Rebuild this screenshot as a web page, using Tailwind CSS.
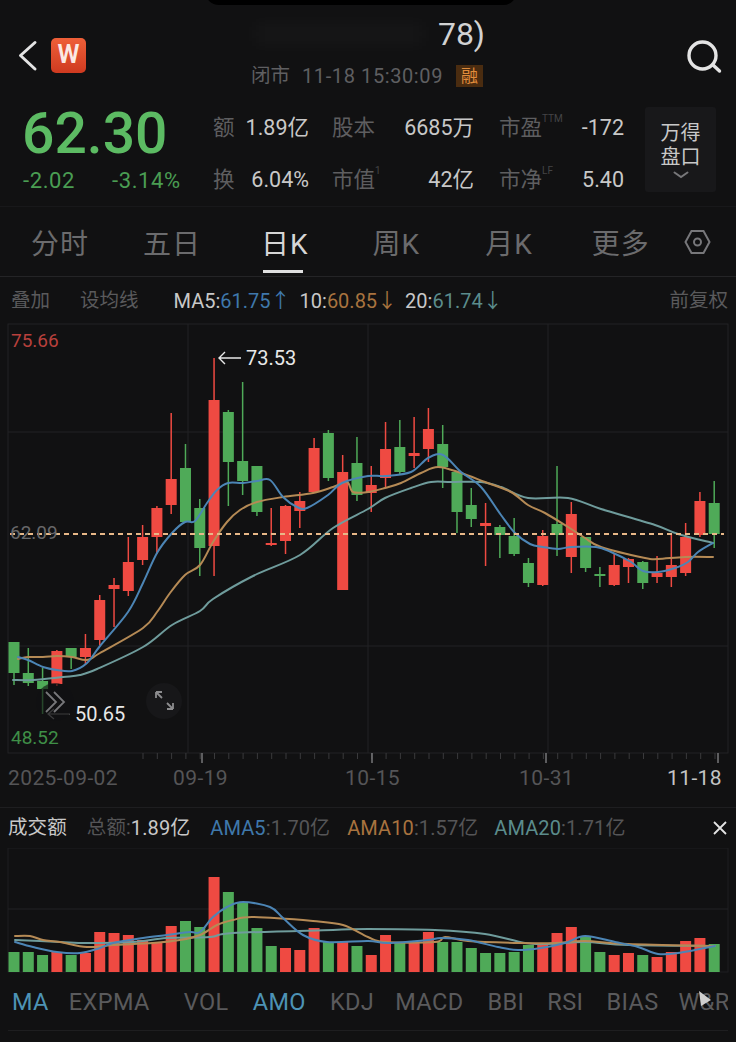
<!DOCTYPE html>
<html lang="zh">
<head>
    <meta charset="UTF-8">
    <title>日K</title>
    <script src="https://cdn.jsdelivr.net/npm/@tailwindcss/browser@4"></script>
</head>
<body class="bg-[#111112]">
<div class="relative w-[736px] h-[1042px] overflow-hidden bg-[#111112] font-[Roboto,'Noto_Sans_CJK_SC',sans-serif] text-[#c8c8c8]">
    <!-- notch -->
    <div class="absolute left-[205px] top-[-20px] w-[312px] h-[25px] rounded-b-[14px] bg-black"></div>

    <!-- header -->
    <header class="relative h-[100px] flex items-start pl-[18px] pr-[14px]">
        <svg class="mt-[40px]" width="20" height="32" viewBox="0 0 20 32" fill="none" stroke="#e4e4e4" stroke-width="3" stroke-linecap="round" stroke-linejoin="round"><path d="M17 2.5 L2.5 15.5 L17 29"/></svg>
        <div class="ml-[13px] mt-[38px] w-[35px] h-[35px] rounded-[5px] bg-gradient-to-b from-[#ee5f38] to-[#cf3a20] flex items-center justify-center text-[#fbe9e4] font-semibold text-[25px] leading-none pb-[2px]">W</div>
        <div class="ml-[165px] w-[236px] flex flex-col items-end">
            <div class="flex items-center h-[30px] mt-[19px]">
                <div class="w-[170px] h-[24px] bg-white/[0.025] blur-sm mr-[14px]"></div>
                <span class="text-[32px] leading-none text-[#d2d2d2] mr-[2px]">78)</span>
            </div>
            <div class="flex items-center self-start mt-[16px] text-[19.5px] leading-none text-[#5f5f61] whitespace-nowrap">
                <span>闭市</span>
                <span class="ml-[12px] text-[20px] tracking-[0.6px]">11-18 15:30:09</span>
                <span class="ml-[13px] w-[27px] h-[22px] bg-[#4a2c10] text-[#e08c3c] text-[17px] flex items-center justify-center">融</span>
            </div>
        </div>
        <svg class="ml-auto mt-[39px]" width="36" height="36" viewBox="0 0 36 36" fill="none" stroke="#e4e4e4" stroke-width="3.4" stroke-linecap="round"><circle cx="16.5" cy="16.5" r="13.5"/><path d="M27 26 L33.5 32"/></svg>
    </header>

    <!-- quote -->
    <section class="h-[107px] flex pl-[23px] border-b border-[#18181a]">
        <div class="w-[190px]">
            <div class="text-[57px] leading-none font-medium text-[#5cbb63] mt-[5px] ml-[-1px]">62.30</div>
            <div class="flex text-[22px] tracking-[0.6px] leading-none text-[#4a9d53] mt-[8px]">
                <span class="w-[89px]">-2.02</span>
                <span>-3.14%</span>
            </div>
        </div>
        <div class="flex flex-col gap-[22px] mt-[13px] text-[21.5px] leading-[30px] whitespace-nowrap">
            <div class="flex gap-[23px]">
                <div class="w-[96px] flex justify-between"><span class="text-[#5e5e60]">额</span><span>1.89亿</span></div>
                <div class="w-[142px] flex justify-between"><span class="text-[#5e5e60]">股本</span><span>6685万</span></div>
                <div class="w-[125px] ml-[2px] flex justify-between"><span class="text-[#5e5e60]">市盈<sup class="text-[10px] text-[#444446] align-super">TTM</sup></span><span>-172</span></div>
            </div>
            <div class="flex gap-[23px]">
                <div class="w-[96px] flex justify-between"><span class="text-[#5e5e60]">换</span><span>6.04%</span></div>
                <div class="w-[142px] flex justify-between"><span class="text-[#5e5e60]">市值<sup class="text-[10px] text-[#444446] align-super">1</sup></span><span>42亿</span></div>
                <div class="w-[125px] ml-[2px] flex justify-between"><span class="text-[#5e5e60]">市净<sup class="text-[10px] text-[#444446] align-super">LF</sup></span><span>5.40</span></div>
            </div>
        </div>
        <div class="ml-[21px] mt-[7px] w-[71px] h-[85px] rounded-[3px] bg-[#18181a] flex flex-col items-center pt-[14px] text-[20px] leading-[24px]">
            <span>万得</span>
            <span>盘口</span>
            <svg class="mt-[2px]" width="16" height="8" viewBox="0 0 16 8" fill="none" stroke="#77777a" stroke-width="2" stroke-linecap="round"><path d="M1.5 1.5 L8 6 L14.5 1.5"/></svg>
        </div>
    </section>

    <!-- period tabs -->
    <nav class="relative h-[70px] flex items-center pl-[31px] pt-[6px] text-[28px] tracking-[1px] leading-none text-[#6b6b6d] border-b border-[#242426] whitespace-nowrap">
        <span>分时</span>
        <span class="ml-[54px]">五日</span>
        <span class="ml-[60px] text-[#d6d6d6] relative">日K<span class="absolute left-[2px] top-[39px] w-[40px] h-[3px] bg-[#e0e0e0]"></span></span>
        <span class="ml-[64px]">周K</span>
        <span class="ml-[65px]">月K</span>
        <span class="ml-[59px]">更多</span>
        <svg class="ml-[34px] mt-[-6px]" width="27" height="26" viewBox="0 0 27 26" fill="none" stroke="#77777a" stroke-width="2"><path d="M7.5 2 H19.5 L25.5 13 L19.5 24 H7.5 L1.5 13 Z"/><circle cx="13.5" cy="13" r="3.5"/></svg>
    </nav>

    <!-- MA legend -->
    <div class="h-[46px] flex items-center pl-[11px] pr-[8px] pt-[2px] text-[19.5px] leading-none whitespace-nowrap">
        <span class="text-[#5a5a5c]">叠加</span>
        <span class="ml-[30px] text-[#5a5a5c]">设均线</span>
        <span class="ml-[35px] flex text-[20px]">
            <span>MA5:</span><span class="text-[#3f78ab]">61.75↑</span>
            <span class="ml-[9px]">10:</span><span class="text-[#a8733f]">60.85↓</span>
            <span class="ml-[8px]">20:</span><span class="text-[#5b8c8c]">61.74↓</span>
        </span>
        <span class="ml-auto text-[#5a5a5c]">前复权</span>
    </div>

    <!-- k line chart -->
    <div class="relative h-[485px] border-b border-[#1e1e20]">
        <svg id="kline" class="block" width="736" height="484" viewBox="0 323 736 484"></svg>
        <span class="absolute left-[11px] top-[7px] text-[19px] leading-[22px] text-[#b8403c]">75.66</span>
        <span class="absolute left-[246px] top-[23px] text-[20px] leading-[24px] text-[#e8e8e8]">73.53</span>
        <span class="absolute left-[10px] top-[199px] text-[19px] leading-[22px] text-[#68686a]">62.09</span>
        <span class="absolute left-[75px] top-[379px] text-[20px] leading-[24px] text-[#e8e8e8]">50.65</span>
        <span class="absolute left-[11px] top-[404px] text-[19px] leading-[22px] text-[#3f8f47]">48.52</span>
        <div class="absolute left-[8px] top-[443px] w-[720px] text-[21px] leading-[24px] text-[#555557] tracking-[0.4px]">
            <div class="flex">
                <span>2025-09-02</span>
                <span class="ml-[55px]">09-19</span>
                <span class="ml-[117px]">10-15</span>
                <span class="ml-[119px]">10-31</span>
                <span class="ml-auto mr-[6px] text-[#c4c4c4]">11-18</span>
            </div>
        </div>
    </div>

    <!-- volume legend -->
    <div class="h-[40px] flex items-center pl-[8px] pr-[9px] text-[20px] tracking-[0.1px] leading-none whitespace-nowrap">
        <span class="text-[19.5px]">成交额</span>
        <span class="ml-[20px] text-[#555557] text-[19.5px]">总额:</span><span>1.89亿</span>
        <span class="ml-[20px] text-[#3f78ab]">AMA5</span><span class="text-[#555557]">:1.70亿</span>
        <span class="ml-[17px] text-[#a8733f]">AMA10</span><span class="text-[#555557]">:1.57亿</span>
        <span class="ml-[16px] text-[#5b8c8c]">AMA20</span><span class="text-[#555557]">:1.71亿</span>
        <svg class="ml-auto" width="14" height="14" viewBox="0 0 14 14" stroke="#e4e4e4" stroke-width="1.8"><path d="M1 1 L13 13 M13 1 L1 13"/></svg>
    </div>

    <!-- volume chart -->
    <svg id="vol" class="block" width="736" height="126" viewBox="0 848 736 126"></svg>

    <!-- indicator tabs -->
    <div class="relative h-[57px] mx-[8px] pt-[2px] border-b border-[#1e1e20] overflow-hidden flex items-center pl-[4px] text-[23.5px] tracking-[0.4px] leading-none text-[#5a5a5c] whitespace-nowrap">
        <span class="text-[#4d93b5]">MA</span>
        <span class="ml-[20px]">EXPMA</span>
        <span class="ml-[16px] w-px h-[26px] bg-[#262628]"></span>
        <span class="ml-[18px]">VOL</span>
        <span class="ml-[24px] text-[#4d93b5]">AMO</span>
        <span class="ml-[24px]">KDJ</span>
        <span class="ml-[21px]">MACD</span>
        <span class="ml-[24px]">BBI</span>
        <span class="ml-[23px]">RSI</span>
        <span class="ml-[23px]">BIAS</span>
        <span class="ml-[20px]">W&amp;R</span>
        <svg class="absolute left-[690px] top-[16px]" width="14" height="18" viewBox="0 0 14 18"><path d="M1 1 L13 10 L3 16 Z" fill="#cfcfcf"/></svg>
    </div>
</div>

<script>
const RED='#ef4a42', GREEN='#4faa58', BLUE='#4c85b5', ORANGE='#b58a55', TEAL='#6f9c9c', GRID='#232325';
const xAt=i=>14+i*14.29;

// [color, wick top, body top, body bottom, wick bottom]
const candles=[
 ['g',642,642,673,685],['g',648,673,683,686],['g',668,681,689,714],['r',650,651,684,686],['g',648,648,657,669],
 ['r',634,648,657,665],['r',595,600,640,645],['r',578,585,589,627],['r',537,562,591,596],['r',525,537,560,565],
 ['r',506,508,537,554],['r',413,479,505,514],['g',444,468,522,522],['g',499,508,548,576],['r',358,400,546,576],
 ['g',410,412,462,506],['g',382,461,481,495],['g',466,466,512,516],['r',508,543,545,546],['r',505,506,541,554],
 ['r',492,501,511,528],['r',438,448,492,492],['g',430,433,478,481],['r',455,472,590,590],['g',437,463,495,501],
 ['r',466,485,493,512],['r',422,449,478,487],['g',420,447,472,475],['r',417,453,456,468],['r',408,429,449,462],
 ['g',425,444,467,488],['g',472,472,512,533],['g',488,505,519,527],['r',503,523,526,566],['g',525,527,535,558],
 ['g',518,536,554,556],['g',558,563,583,587],['r',530,536,585,586],['g',466,524,535,556],['r',502,514,557,573],
 ['g',537,537,568,572],['g',567,574,576,587],['r',554,565,585,586],['r',558,559,567,583],['g',561,562,583,589],
 ['r',556,573,577,583],['r',533,565,577,587],['r',523,537,573,576],['r',492,501,535,537],['g',481,503,534,548]
];
const ma5=[[18,657],[28,660],[43,667],[57,670],[72,671],[87,663],[100,646],[128,612],[143,583],[157,553],[172,533],[185,522],[195,521],[207,503],[217,490],[228,483],[243,483],[257,481],[270,480],[283,497],[297,507],[307,508],[328,495],[342,483],[368,476],[385,476],[411,472],[428,458],[443,455],[461,472],[481,487],[501,515],[515,533],[530,544],[543,547],[558,549],[571,547],[596,547],[611,552],[631,562],[643,571],[658,572],[675,568],[688,562],[698,552],[713,543]];
const ma10=[[18,659],[28,657],[43,657],[57,656],[72,657],[87,660],[100,653],[143,628],[157,612],[170,593],[185,575],[200,565],[213,542],[227,522],[240,510],[257,502],[283,497],[313,493],[333,487],[347,482],[353,492],[368,492],[385,488],[401,483],[421,473],[438,467],[461,473],[485,482],[511,492],[528,505],[545,513],[568,527],[585,538],[601,547],[645,558],[658,559],[685,557],[713,557]];
const ma20=[[13,680],[33,680],[63,677],[80,675],[97,669],[143,647],[172,625],[200,611],[213,599],[253,576],[300,555],[333,528],[368,509],[385,498],[411,488],[431,482],[451,482],[481,482],[501,487],[528,498],[568,498],[601,509],[655,525],[678,534],[713,543]];

// volume tops and colour per bar
const vols=[952,952,955,952,955,953,932,933,935,940,942,926,921,927,877,892,903,928,946,948,950,928,942,942,946,955,935,942,942,932,942,942,948,953,953,952,945,945,933,927,936,952,955,953,955,957,952,941,938,944];
const volCol='gggrgrrrrrrrggrggggrrrgrgrrgrrgggggggrrrggrrgrrrrg';
const ama5=[[15,942],[33,947],[57,952],[80,953],[100,948],[113,943],[143,938],[167,935],[190,932],[200,932],[213,917],[227,907],[243,902],[270,907],[283,918],[303,935],[327,942],[368,941],[388,943],[428,940],[441,938],[468,940],[498,947],[518,950],[541,948],[565,943],[585,936],[615,942],[638,947],[658,954],[678,953],[715,946]];
const ama10=[[15,936],[30,936],[43,940],[60,942],[87,947],[113,945],[153,943],[180,940],[200,935],[217,925],[233,920],[253,917],[313,921],[343,925],[368,937],[385,942],[435,942],[445,937],[468,941],[521,943],[555,943],[585,941],[628,944],[715,946]];
const ama20=[[15,940],[60,942],[87,943],[133,942],[167,938],[210,937],[233,933],[333,930],[368,929],[435,930],[485,934],[525,943],[548,944],[585,942],[628,945],[715,946]];

const line=(x1,y1,x2,y2,c,w=1)=>`<line x1="${x1}" y1="${y1}" x2="${x2}" y2="${y2}" stroke="${c}" stroke-width="${w}"/>`;
const rect=(x,y,w,h,c)=>`<rect x="${x}" y="${y}" width="${w}" height="${h}" fill="${c}"/>`;
// smooth curve through the points
function curve(pts,c,w=2){
    let d=`M${pts[0][0]} ${pts[0][1]}`;
    for(let i=0;i<pts.length-1;i++){
        const p0=pts[i-1]||pts[i], p1=pts[i], p2=pts[i+1], p3=pts[i+2]||p2;
        d+=` C${p1[0]+(p2[0]-p0[0])/6} ${p1[1]+(p2[1]-p0[1])/6} ${p2[0]-(p3[0]-p1[0])/6} ${p2[1]-(p3[1]-p1[1])/6} ${p2[0]} ${p2[1]}`;
    }
    return `<path d="${d}" fill="none" stroke="${c}" stroke-width="${w}" stroke-linecap="round"/>`;
}

let k='';
// grid
k+=`<rect x="8" y="324" width="720" height="429" fill="none" stroke="${GRID}"/>`;
[188,368,548].forEach(x=>k+=line(x,324,x,753,GRID));
[432,646].forEach(y=>k+=line(8,y,728,y,GRID));
// candles
candles.forEach((c,i)=>{
    const x=xAt(i), col=c[0]==='r'?RED:GREEN;
    k+=line(x,c[1],x,c[4],col,1.5);
    k+=rect(x-5.5,c[2],11,c[3]-c[2],col);
});
k+=curve(ma20,TEAL)+curve(ma10,ORANGE)+curve(ma5,BLUE);
// current price
k+=`<line x1="10" y1="534" x2="724" y2="534" stroke="#e8b888" stroke-width="2" stroke-dasharray="5 4"/>`;
// axis ticks
for(let x=143;x<=722;x+=14.3) k+=line(x,753,x,759,'#3a3a3c');
[202,372,546,718].forEach(x=>k+=line(x,753,x,763,'#77777a',1.5));
// low / high arrows
k+=`<path d="M241 358 H219 M225 352 L219 358 L225 364" fill="none" stroke="#e8e8e8" stroke-width="1.4"/>`;
k+=`<path d="M70 714 H49 M54 709 L48 714 L54 719" fill="none" stroke="#8a8a8c" stroke-width="1.2"/>`;
// floating round buttons
k+=`<circle cx="55" cy="702" r="19" fill="#111112" fill-opacity="0.65"/>`;
k+=`<path d="M46 692 L56 702 L46 712 M54 692 L64 702 L54 712" fill="none" stroke="#77777a" stroke-width="1.8"/>`;
k+=`<circle cx="164" cy="701" r="18" fill="#171719"/>`;
k+=`<path d="M156 692 L162 698 M156 692 V698 M156 692 H162 M173 709 L167 703 M173 709 V703 M173 709 H167" fill="none" stroke="#8c8c8e" stroke-width="1.8"/>`;
document.getElementById('kline').innerHTML=k;

let v='';
v+=`<rect x="8" y="848" width="720" height="124" fill="none" stroke="#1e1e20"/>`;
v+=line(8,909,728,909,GRID);
vols.forEach((top,i)=>{ v+=rect(xAt(i)-5.5,top,11,972-top,volCol[i]==='r'?RED:GREEN); });
v+=curve(ama20,TEAL)+curve(ama10,ORANGE)+curve(ama5,BLUE);
document.getElementById('vol').innerHTML=v;
</script>
</body>
</html>
